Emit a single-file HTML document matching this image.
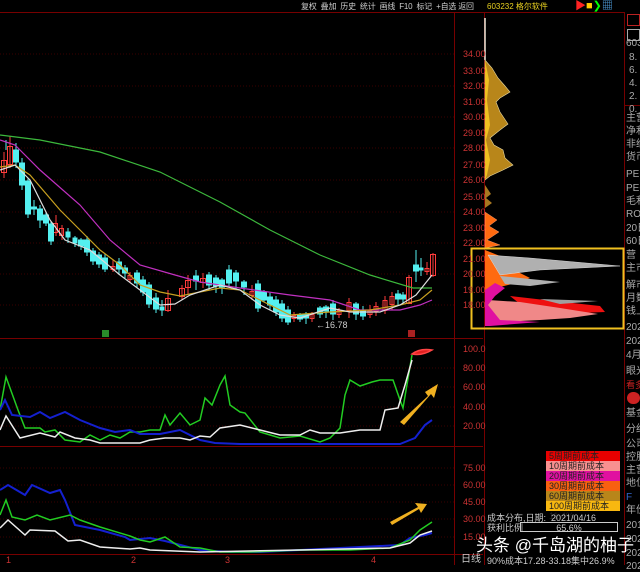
<!DOCTYPE html>
<html><head><meta charset="utf-8"><style>
body{margin:0;width:640px;height:565px;background:#000;overflow:hidden;position:relative;font-family:"Liberation Sans","Noto Sans CJK SC",sans-serif;}
.t{position:absolute;white-space:nowrap;font-size:9px;line-height:10px}
.ax{color:#c33;font-size:9px;position:absolute;left:463px}
.rp{position:absolute;left:626px;color:#aaa;font-size:10px;line-height:11px;white-space:nowrap}
.lg{position:absolute;left:546px;width:74px;height:10px;font-size:9px;line-height:10px;color:#222;padding-left:3px;box-sizing:border-box}
</style></head><body>
<svg width="640" height="565" style="position:absolute;left:0;top:0">
<g stroke="#700" stroke-width="1" fill="none">
<line x1="0" y1="12.5" x2="625" y2="12.5"/>
<line x1="0" y1="338.5" x2="483" y2="338.5"/>
<line x1="0" y1="446.5" x2="483" y2="446.5"/>
<line x1="0" y1="554.5" x2="483" y2="554.5"/>
<line x1="454.5" y1="12" x2="454.5" y2="565"/>
<line x1="484.5" y1="12" x2="484.5" y2="565"/>
<line x1="624.5" y1="12" x2="624.5" y2="565"/>
<line x1="625" y1="105.5" x2="640" y2="105.5"/>
</g>
<g stroke="#3a0000" stroke-dasharray="1,2">
<line x1="0" y1="54" x2="454" y2="54"/><line x1="0" y1="86" x2="454" y2="86"/><line x1="0" y1="117" x2="454" y2="117"/><line x1="0" y1="148" x2="454" y2="148"/><line x1="0" y1="180" x2="454" y2="180"/><line x1="0" y1="212" x2="454" y2="212"/><line x1="0" y1="243" x2="454" y2="243"/><line x1="0" y1="274" x2="454" y2="274"/><line x1="0" y1="305" x2="454" y2="305"/>
<line x1="0" y1="368" x2="454" y2="368"/><line x1="0" y1="387" x2="454" y2="387"/><line x1="0" y1="407" x2="454" y2="407"/><line x1="0" y1="426" x2="454" y2="426"/>
<line x1="0" y1="468" x2="454" y2="468"/><line x1="0" y1="485" x2="454" y2="485"/><line x1="0" y1="502" x2="454" y2="502"/><line x1="0" y1="519" x2="454" y2="519"/><line x1="0" y1="537" x2="454" y2="537"/>
</g>
<g stroke-width="1">
<g stroke="#ff3c3c" fill="none">
<line x1="4" y1="152" x2="4" y2="178"/><rect x="1.5" y="160.5" width="5" height="12"/>
<line x1="10" y1="136" x2="10" y2="168"/><rect x="7.5" y="146.5" width="5" height="18"/>
<line x1="56" y1="215" x2="56" y2="236"/><rect x="53.5" y="223.5" width="4" height="9"/>
<line x1="62" y1="225" x2="62" y2="240"/><rect x="59.5" y="228.5" width="4" height="7"/>
<line x1="113" y1="260" x2="113" y2="272"/><rect x="111" y="266.5" width="4" height="3"/>
<line x1="130" y1="272" x2="130" y2="282"/><rect x="128" y="275.5" width="4" height="4"/>
<line x1="168" y1="290" x2="168" y2="312"/><rect x="165.5" y="298.5" width="5" height="12"/>
<line x1="182" y1="285" x2="182" y2="300"/><rect x="179.5" y="288.5" width="5" height="8"/>
<line x1="188" y1="275" x2="188" y2="295"/><rect x="185.5" y="280.5" width="5" height="7"/>
<line x1="203" y1="273" x2="203" y2="288"/><rect x="200.5" y="278.5" width="5" height="4"/>
<line x1="252" y1="285" x2="252" y2="300"/><rect x="250" y="291.5" width="4" height="4"/>
<line x1="294" y1="312" x2="294" y2="322"/><rect x="292" y="315.5" width="4" height="3"/>
<line x1="312" y1="312" x2="312" y2="322"/><rect x="310" y="314.5" width="4" height="4"/>
<line x1="339" y1="308" x2="339" y2="318"/><rect x="337" y="310.5" width="4" height="4"/>
<line x1="349" y1="298" x2="349" y2="318"/><rect x="347" y="302.5" width="4" height="8"/>
<line x1="370" y1="305" x2="370" y2="318"/><rect x="368" y="310.5" width="4" height="4"/>
<line x1="376" y1="302" x2="376" y2="316"/><rect x="374" y="306.5" width="4" height="5"/>
<line x1="385" y1="296" x2="385" y2="314"/><rect x="383" y="300.5" width="4" height="10"/>
<line x1="392" y1="292" x2="392" y2="310"/><rect x="390" y="296.5" width="4" height="8"/>
<line x1="409" y1="275" x2="409" y2="304"/><rect x="406.5" y="277.5" width="5" height="26"/>
<line x1="427" y1="262" x2="427" y2="275"/><rect x="425" y="268.5" width="4" height="3"/>
<line x1="433" y1="253" x2="433" y2="277"/><rect x="430.5" y="254.5" width="5" height="21"/>
</g>
<g stroke="#54f0f0" fill="#54f0f0">
<line x1="6" y1="140" x2="6" y2="150"/>
<line x1="16" y1="143" x2="16" y2="168"/><rect x="13.5" y="150" width="5" height="12"/>
<line x1="22" y1="158" x2="22" y2="190"/><rect x="19.5" y="163" width="5" height="22"/>
<line x1="28" y1="178" x2="28" y2="218"/><rect x="25.5" y="181" width="5" height="33"/>
<line x1="34" y1="200" x2="34" y2="215"/><rect x="31.5" y="207" width="5" height="2"/>
<line x1="40" y1="205" x2="40" y2="228"/><rect x="37.5" y="209" width="5" height="11"/>
<line x1="46" y1="212" x2="46" y2="226"/><rect x="43.5" y="215" width="5" height="8"/>
<line x1="51" y1="222" x2="51" y2="245"/><rect x="48.5" y="224" width="5" height="17"/>
<line x1="68" y1="228" x2="68" y2="243"/><rect x="66" y="232" width="4" height="5"/>
<line x1="75" y1="236" x2="75" y2="247"/><rect x="73" y="238" width="4" height="5"/>
<line x1="81" y1="238" x2="81" y2="250"/><rect x="78.5" y="240" width="5" height="6"/>
<line x1="87" y1="236" x2="87" y2="256"/><rect x="84.5" y="240" width="5" height="12"/>
<line x1="93" y1="248" x2="93" y2="265"/><rect x="90.5" y="251" width="5" height="10"/>
<line x1="99" y1="252" x2="99" y2="268"/><rect x="96.5" y="255" width="5" height="9"/>
<line x1="105" y1="254" x2="105" y2="272"/><rect x="102.5" y="258" width="5" height="11"/>
<line x1="119" y1="258" x2="119" y2="275"/><rect x="116.5" y="262" width="5" height="7"/>
<line x1="125" y1="265" x2="125" y2="278"/><rect x="122.5" y="268" width="5" height="5"/>
<line x1="137" y1="270" x2="137" y2="288"/><rect x="134.5" y="273" width="5" height="10"/>
<line x1="143" y1="276" x2="143" y2="296"/><rect x="140.5" y="280" width="5" height="12"/>
<line x1="149" y1="282" x2="149" y2="308"/><rect x="146.5" y="285" width="5" height="19"/>
<line x1="156" y1="293" x2="156" y2="313"/><rect x="153.5" y="298" width="5" height="11"/>
<line x1="162" y1="300" x2="162" y2="316"/><rect x="160" y="307" width="4" height="3"/>
<line x1="196" y1="270" x2="196" y2="290"/><rect x="193.5" y="276" width="5" height="5"/>
<line x1="209" y1="272" x2="209" y2="290"/><rect x="206.5" y="275" width="5" height="10"/>
<line x1="216" y1="275" x2="216" y2="293"/><rect x="213.5" y="278" width="5" height="8"/>
<line x1="222" y1="278" x2="222" y2="294"/><rect x="219.5" y="280" width="5" height="7"/>
<line x1="229" y1="265" x2="229" y2="286"/><rect x="226.5" y="270" width="5" height="13"/>
<line x1="236" y1="270" x2="236" y2="290"/><rect x="233.5" y="273" width="5" height="8"/>
<line x1="244" y1="280" x2="244" y2="295"/><rect x="241.5" y="282" width="5" height="5"/>
<line x1="258" y1="280" x2="258" y2="312"/><rect x="255.5" y="284" width="5" height="24"/>
<line x1="264" y1="290" x2="264" y2="302"/><rect x="261.5" y="292" width="5" height="8"/>
<line x1="270" y1="293" x2="270" y2="310"/><rect x="267.5" y="297" width="5" height="8"/>
<line x1="276" y1="296" x2="276" y2="316"/><rect x="273.5" y="300" width="5" height="12"/>
<line x1="282" y1="300" x2="282" y2="322"/><rect x="279.5" y="304" width="5" height="14"/>
<line x1="288" y1="306" x2="288" y2="325"/><rect x="285.5" y="310" width="5" height="12"/>
<line x1="300" y1="313" x2="300" y2="322"/><rect x="297.5" y="315" width="5" height="4"/>
<line x1="306" y1="312" x2="306" y2="324"/><rect x="303.5" y="314" width="5" height="4"/>
<line x1="320" y1="306" x2="320" y2="318"/><rect x="317.5" y="308" width="5" height="6"/>
<line x1="326" y1="305" x2="326" y2="318"/><rect x="323.5" y="307" width="5" height="4"/>
<line x1="333" y1="300" x2="333" y2="320"/><rect x="330.5" y="304" width="5" height="10"/>
<line x1="356" y1="302" x2="356" y2="320"/><rect x="353.5" y="304" width="5" height="10"/>
<line x1="363" y1="306" x2="363" y2="320"/><rect x="360.5" y="310" width="5" height="6"/>
<line x1="398" y1="290" x2="398" y2="305"/><rect x="395.5" y="294" width="5" height="5"/>
<line x1="403" y1="292" x2="403" y2="304"/><rect x="400.5" y="295" width="5" height="4"/>
<line x1="416" y1="250" x2="416" y2="282"/><rect x="413.5" y="265" width="5" height="6"/>
<line x1="421" y1="258" x2="421" y2="276"/><rect x="419" y="268" width="4" height="2"/>
</g>
</g>
<g fill="none" stroke-width="1.2">
<polyline stroke="#3cb83c" points="0,135 40,140 100,152 160,172 220,202 270,230 320,255 370,275 413,288 432,288"/>
<polyline stroke="#c030c0" points="0,140 15,145 40,170 80,205 110,240 140,265 175,275 200,282 220,285 240,288 290,295 330,300 360,310 400,310 420,305 432,300"/>
<polyline stroke="#c8a020" points="0,167 15,165 30,175 60,210 80,230 100,250 120,265 140,285 160,292 180,296 200,292 220,288 240,290 260,300 290,315 330,312 370,310 400,305 420,300 432,290"/>
<polyline stroke="#ddd" points="0,170 15,165 30,180 50,220 65,240 90,250 120,275 140,290 160,305 175,304 190,295 220,285 240,290 260,305 280,315 300,318 330,308 350,312 380,312 400,305 416,295 432,275"/>
</g>
<text x="316" y="328" fill="#ccc" font-size="9" font-family="Liberation Sans">←16.78</text>
<rect x="102" y="330" width="7" height="7" fill="#2a8a2a"/>
<rect x="408" y="330" width="7" height="7" fill="#a22"/>
<g fill="none" stroke-width="1.5">
<polyline stroke="#22cc22" points="0,410 6,377 18,410 25,428 40,428 45,432 55,430 65,440 80,442 90,435 100,440 110,435 120,438 130,432 140,432 150,430 160,430 165,415 170,425 180,413 190,425 200,420 205,398 212,405 220,385 225,376 230,405 240,412 245,413 260,432 280,438 300,436 320,442 330,438 340,428 345,395 350,380 360,386 372,382 380,380 393,380 400,400 403,408 412,355"/>
<polyline stroke="#1420d0" stroke-width="2" points="0,410 5,400 12,415 30,417 40,412 50,418 65,412 80,420 100,428 115,432 130,430 140,434 160,434 180,430 200,440 215,443 240,444 400,444 410,440 415,438 425,425 432,420"/>
<polyline stroke="#eee" points="0,430 6,416 20,438 40,433 55,437 60,432 75,438 90,440 100,443 140,443 150,440 165,438 180,438 190,440 200,436 210,437 220,428 240,425 260,430 280,435 300,435 310,430 320,433 340,433 360,430 380,430 385,410 398,408 405,385 412,360"/>
<path d="M412,354 Q420,348 432,350 Q422,356 412,354Z" fill="#e02020" stroke="#f44"/>
</g>
<polygon points="400,422 428,396 425,392 438,384 434,398 431,394 404,425" fill="#f0b020"/>
<g fill="none" stroke-width="1.5">
<polyline stroke="#1420d0" stroke-width="2" points="0,490 8,485 25,495 32,485 50,493 60,490 65,500 75,525 100,530 125,537 130,540 150,538 165,541 200,550 230,552 260,552 300,550 340,548 400,545 410,538 425,535 432,533"/>
<polyline stroke="#22cc22" points="0,515 6,500 12,517 25,520 37,515 50,520 70,515 80,520 100,527 130,536 140,540 150,542 165,537 180,547 200,548 220,552 250,552 300,550 350,550 390,548 410,540 420,530 432,522"/>
<polyline stroke="#eee" points="0,528 8,520 25,535 30,530 55,531 68,541 80,540 100,547 130,549 140,548 150,550 200,552 300,550 390,548 410,543 420,535 432,531"/>
</g>
<polygon points="390,522 418,507 415,503 427,504 421,513 419,509 392,525" fill="#f0b020"/>
<!-- chips -->
<line x1="485" y1="18" x2="485" y2="60" stroke="#eed" stroke-width="1.5"/>
<polygon fill="#b8861a" stroke="#e8d8a0" stroke-width="0.6" points="485,60 492,68 498,78 505,86 510,92 500,98 496,102 500,112 508,124 500,130 490,138 494,145 503,150 505,158 513,165 503,170 490,176 485,180"/>
<polygon fill="#f0c020" points="485,60 489,80 487,100 490,125 486,140 490,160 487,175 485,180"/>
<polygon fill="#a87820" points="485,185 491,194 486,198 492,203 485,208"/>
<polygon fill="#ff6a10" stroke="#fa8" stroke-width="0.4" points="485,212 497,220 489,226 499,232 487,240 500,245 485,248"/>
<polygon fill="#ff6a10" points="485,250 500,256 512,262 518,272 530,278 520,282 500,287 490,292 487,300 485,302"/>
<polygon fill="#b0b0b0" stroke="#eee" stroke-width="0.4" points="488,255 530,258 620,266 540,270 500,275"/>
<polygon fill="#b0b0b0" points="500,276 560,282 530,286 505,284"/>
<polygon fill="#ee1010" points="510,296 545,300 600,306 605,312 580,313 560,316 530,312"/>
<polygon fill="#a0a0a0" points="540,299 598,301 560,304"/>
<polygon fill="#f08888" points="488,300 520,302 560,308 598,314 570,318 540,320 500,322 488,323"/>
<polygon fill="#e010a0" points="485,290 495,283 505,288 495,296 488,305 500,320 540,322 490,326 485,326"/>
<rect x="471.5" y="248.5" width="152" height="80" fill="none" stroke="#f0c020" stroke-width="2"/>
</svg>
<div class="t" style="left:301px;top:2px;color:#ccc;font-size:8px;letter-spacing:-0.2px">复权 &nbsp;叠加 &nbsp;历史 &nbsp;统计 &nbsp;画线 &nbsp;F10 &nbsp;标记 &nbsp;+自选 返回</div>
<div class="t" style="left:487px;top:2px;color:#e8d020;font-size:8px">603232 格尔软件</div>
<div class="t" style="left:575px;top:1px;color:#f22;font-size:11px">▶<span style="color:#fc0">■</span><span style="color:#0f0">❯</span><span style="color:#5ae">▦</span></div>
<div class="ax" style="top:49px">34.00</div><div class="ax" style="top:66px">33.00</div><div class="ax" style="top:81px">32.00</div><div class="ax" style="top:97px">31.00</div><div class="ax" style="top:112px">30.00</div><div class="ax" style="top:128px">29.00</div><div class="ax" style="top:143px">28.00</div><div class="ax" style="top:160px">27.00</div><div class="ax" style="top:175px">26.00</div><div class="ax" style="top:192px">25.00</div><div class="ax" style="top:207px">24.00</div><div class="ax" style="top:223px">23.00</div><div class="ax" style="top:238px">22.00</div><div class="ax" style="top:254px">21.00</div><div class="ax" style="top:269px">20.00</div><div class="ax" style="top:285px">19.00</div><div class="ax" style="top:300px">18.00</div>
<div class="ax" style="top:344px">100.0</div><div class="ax" style="top:363px">80.00</div><div class="ax" style="top:382px">60.00</div><div class="ax" style="top:402px">40.00</div><div class="ax" style="top:421px">20.00</div>
<div class="ax" style="top:463px">75.00</div><div class="ax" style="top:480px">60.00</div><div class="ax" style="top:497px">45.00</div><div class="ax" style="top:514px">30.00</div><div class="ax" style="top:532px">15.00</div>
<div class="t" style="left:6px;top:555px;color:#c33">1</div><div class="t" style="left:131px;top:555px;color:#c33">2</div><div class="t" style="left:225px;top:555px;color:#c33">3</div><div class="t" style="left:371px;top:555px;color:#c33">4</div>
<div class="t" style="left:461px;top:555px;color:#ccc;font-size:10px">日线</div>
<div class="lg" style="top:451px;background:#e80000">5周期前成本77.9%</div>
<div class="lg" style="top:461px;background:#f89090">10周期前成本70.9%</div>
<div class="lg" style="top:471px;background:#e010a0">20周期前成本57.4%</div>
<div class="lg" style="top:481px;background:#f86010">30周期前成本49.0%</div>
<div class="lg" style="top:491px;background:#b8861a">60周期前成本31.2%</div>
<div class="lg" style="top:501px;background:#f8b810">100周期前成本11.4%</div>
<div class="t" style="left:487px;top:513px;color:#ccc">成本分布,日期: &nbsp;2021/04/16</div>
<div class="t" style="left:487px;top:523px;color:#ccc">获利比例</div>
<div style="position:absolute;left:520px;top:522px;width:98px;height:10px;border:1px solid #ccc;color:#ccc;font-size:9px;line-height:10px;text-align:center;box-sizing:border-box">65.6%</div>
<div class="t" style="left:476px;top:536px;color:#fff;font-size:17px;line-height:19px">头条 @千岛湖的柚子</div>
<div class="t" style="left:487px;top:556px;color:#ccc">90%成本17.28-33.18集中26.9%</div>
<div style="position:absolute;left:627px;top:14px;width:13px;height:12px;border:1px solid #b22;box-sizing:border-box"></div>
<div style="position:absolute;left:627px;top:29px;width:13px;height:12px;border:1px solid #aaa;box-sizing:border-box"></div>
<div class="rp" style="top:38px">603</div>
<div class="rp" style="top:52px;left:629px">8.</div><div class="rp" style="top:65px;left:629px">6.</div><div class="rp" style="top:78px;left:629px">4.</div><div class="rp" style="top:91px;left:629px">2.</div><div class="rp" style="top:104px;left:629px">0.</div>
<div class="rp" style="top:113px">主营</div><div class="rp" style="top:126px">净利</div><div class="rp" style="top:139px">非经</div><div class="rp" style="top:152px">货币</div>
<div class="rp" style="top:169px">PE</div><div class="rp" style="top:183px">PEG</div><div class="rp" style="top:196px">毛利</div><div class="rp" style="top:209px">ROE</div>
<div class="rp" style="top:223px">20日</div><div class="rp" style="top:236px">60日</div><div class="rp" style="top:250px">营</div><div class="rp" style="top:263px">主市</div><div class="rp" style="top:280px">解市</div><div class="rp" style="top:293px">月数</div><div class="rp" style="top:306px">钱上</div><div class="rp" style="top:322px">202</div><div class="rp" style="top:336px">202</div><div class="rp" style="top:350px">4月</div><div class="rp" style="top:366px">眼光</div><div class="rp" style="top:380px;color:#c22;font-size:9px">看多</div>
<div style="position:absolute;left:627px;top:392px;width:13px;height:12px;border-radius:6px;background:#c22"></div>
<div class="rp" style="top:408px">基金</div><div class="rp" style="top:424px">分红</div><div class="rp" style="top:439px">公司</div><div class="rp" style="top:452px">控股</div><div class="rp" style="top:465px">主营</div><div class="rp" style="top:478px">地位</div>
<div class="rp" style="top:492px;color:#36c">F</div>
<div class="rp" style="top:505px">年份</div><div class="rp" style="top:520px">201</div><div class="rp" style="top:534px">202</div><div class="rp" style="top:548px">202</div><div class="rp" style="top:561px">202</div>
</body></html>
